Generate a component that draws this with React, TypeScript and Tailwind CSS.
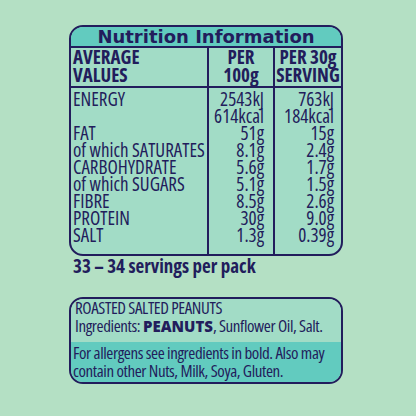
const NAVY = 'text-[#221d5c]'

const rows: [string, string[], string[]][] = [
  ['ENERGY', ['2543kJ', '614kcal'], ['763kJ', '184kcal']],
  ['FAT', ['51g'], ['15g']],
  ['of which SATURATES', ['8.1g'], ['2.4g']],
  ['CARBOHYDRATE', ['5.6g'], ['1.7g']],
  ['of which SUGARS', ['5.1g'], ['1.5g']],
  ['FIBRE', ['8.5g'], ['2.6g']],
  ['PROTEIN', ['30g'], ['9.0g']],
  ['SALT', ['1.3g'], ['0.39g']],
]

function NutritionTable() {
  return (
    <div className="w-[274px] border-2 border-[#221d5c] rounded-[14px] overflow-hidden bg-[#a2dcc6]">
      <div className="h-[21px] bg-[#62cbbf] border-b-2 border-[#221d5c] text-center font-['DejaVu_Sans',sans-serif] font-bold text-[18px] leading-[19px]">
        Nutrition Information
      </div>
      <div className="grid grid-cols-[138px_66px_66px] font-['Open_Sans',sans-serif] [font-stretch:80%] text-[19px]">
        <div className="border-r-2 border-b-2 border-[#221d5c] pl-[2px] pb-[2px] font-bold leading-[18px]">
          AVERAGE<br />VALUES
        </div>
        <div className="border-r-2 border-b-2 border-[#221d5c] text-center font-bold leading-[18px]">
          PER<br />100g
        </div>
        <div className="border-b-2 border-[#221d5c] text-center font-bold leading-[18px] [font-stretch:75%]">
          PER 30g<br />SERVING
        </div>
        <div className="border-r-2 border-[#221d5c] pl-[2px] pt-[3px] pb-[10px] leading-[17px] font-medium">
          {rows.map(([label, per100]) => (
            <div key={label}>
              <div>{label}</div>
              {per100.length > 1 && <div className="h-[17px]" />}
            </div>
          ))}
        </div>
        <div className="border-r-2 border-[#221d5c] pr-[9px] pt-[3px] text-right leading-[17px] font-medium">
          {rows.map(([label, per100]) => (
            <div key={label}>
              {per100.map((v) => (
                <div key={v}>{v}</div>
              ))}
            </div>
          ))}
        </div>
        <div className="pr-[7px] pt-[3px] text-right leading-[17px] font-medium">
          {rows.map(([label, , per30]) => (
            <div key={label}>
              {per30.map((v) => (
                <div key={v}>{v}</div>
              ))}
            </div>
          ))}
        </div>
      </div>
    </div>
  )
}

export default function App() {
  return (
    <div className={`w-[416px] h-[416px] bg-[#b4e0c4] pt-[25px] pl-[69px] ${NAVY}`}>
      <NutritionTable />
      <div className="font-['Open_Sans',sans-serif] [font-stretch:82%] font-bold text-[19px] leading-[20px] pl-[4px]">
        33 – 34 servings per pack
      </div>
      <div className="mt-[21px] w-[274px] border-2 border-[#221d5c] rounded-[14px] overflow-hidden font-['Open_Sans',sans-serif] [font-stretch:75%] font-medium text-[17px] leading-[18px] tracking-[-0.4px] whitespace-nowrap">
        <div className="bg-[#a2dcc6] pl-[4px] pb-[7px]">
          <div>ROASTED SALTED PEANUTS</div>
          <div>
            Ingredients:{' '}
            <span className="font-extrabold [font-stretch:100%] text-[15px] tracking-normal">PEANUTS</span>, Sunflower Oil, Salt.
          </div>
        </div>
        <div className="bg-[#62cbbf] pl-[2px] pt-[2px] pb-[2px]">
          For allergens see ingredients in bold. Also may
          <br />
          contain other Nuts, Milk, Soya, Gluten.
        </div>
      </div>
    </div>
  )
}
